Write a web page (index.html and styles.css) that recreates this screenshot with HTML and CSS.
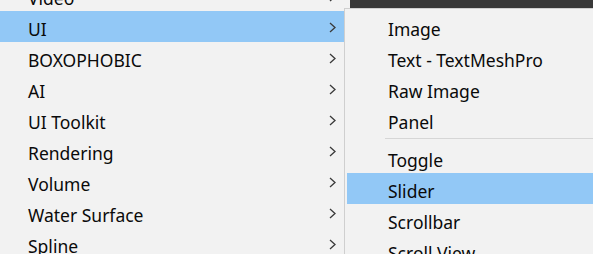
FILE: index.html
```html
<!DOCTYPE html>
<html lang="en">
<head>
    <meta charset="UTF-8">
    <title>Create Menu</title>
    <link rel="stylesheet" href="styles.css">
</head>
<body>
    <div class="screen">
        <div class="backdrop"></div>

        <ul class="menu">
            <li class="item">Video<svg class="arrow" viewBox="0 0 7 11"><polyline points="1,1 6,5.5 1,10"/></svg></li>
            <li class="item active">UI<svg class="arrow" viewBox="0 0 7 11"><polyline points="1,1 6,5.5 1,10"/></svg></li>
            <li class="item">BOXOPHOBIC<svg class="arrow" viewBox="0 0 7 11"><polyline points="1,1 6,5.5 1,10"/></svg></li>
            <li class="item">AI<svg class="arrow" viewBox="0 0 7 11"><polyline points="1,1 6,5.5 1,10"/></svg></li>
            <li class="item">UI Toolkit<svg class="arrow" viewBox="0 0 7 11"><polyline points="1,1 6,5.5 1,10"/></svg></li>
            <li class="item">Rendering<svg class="arrow" viewBox="0 0 7 11"><polyline points="1,1 6,5.5 1,10"/></svg></li>
            <li class="item">Volume<svg class="arrow" viewBox="0 0 7 11"><polyline points="1,1 6,5.5 1,10"/></svg></li>
            <li class="item">Water Surface<svg class="arrow" viewBox="0 0 7 11"><polyline points="1,1 6,5.5 1,10"/></svg></li>
            <li class="item">Spline<svg class="arrow" viewBox="0 0 7 11"><polyline points="1,1 6,5.5 1,10"/></svg></li>
        </ul>

        <ul class="submenu">
            <li class="sub-item">Image</li>
            <li class="sub-item">Text - TextMeshPro</li>
            <li class="sub-item">Raw Image</li>
            <li class="sub-item">Panel</li>
            <li class="separator"></li>
            <li class="sub-item">Toggle</li>
            <li class="sub-item active">Slider</li>
            <li class="sub-item">Scrollbar</li>
            <li class="sub-item">Scroll View</li>
        </ul>
    </div>
</body>
</html>
```

FILE: styles.css
```css
:root {
    --menu-bg: #f2f2f2;
    --hover: #92c8f6;
    --text: #0a0a0a;
    --border: #cfcfcf;
    --dark: #383838;
}

* {
    margin: 0;
    padding: 0;
    box-sizing: border-box;
}

body {
    background: var(--menu-bg);
    font-family: 'Noto Sans', 'Open Sans', sans-serif;
    font-size: 17.5px;
    color: var(--text);
    overflow: hidden;
}

.screen {
    position: relative;
    width: 593px;
    height: 254px;
    overflow: hidden;
}

.backdrop {
    position: absolute;
    left: 350px;
    top: 0;
    right: 0;
    height: 8px;
    background: var(--dark);
}

.menu {
    list-style: none;
    width: 350px;
    margin-top: -20px;
}

.item {
    display: flex;
    align-items: center;
    justify-content: space-between;
    height: 31px;
    width: 344px;
    padding: 5px 8px 0 28px;
    white-space: nowrap;
}

.item.active,
.sub-item.active {
    background: var(--hover);
}

.arrow {
    width: 7px;
    height: 11px;
    margin-top: -4px;
    fill: none;
    stroke: #3a3a3a;
    stroke-width: 1.3;
}

.submenu {
    position: absolute;
    left: 344px;
    top: 8px;
    width: 300px;
    height: 270px;
    list-style: none;
    background: var(--menu-bg);
    border-left: 1px solid var(--border);
    border-top: 1px solid var(--border);
    padding: 2px 0 0 2px;
}

.sub-item {
    display: flex;
    align-items: center;
    height: 31px;
    padding: 5px 0 0 41px;
    white-space: nowrap;
}

.separator {
    height: 1px;
    margin: 3px 0 3px 38px;
    background: #d6d6d6;
}
```
